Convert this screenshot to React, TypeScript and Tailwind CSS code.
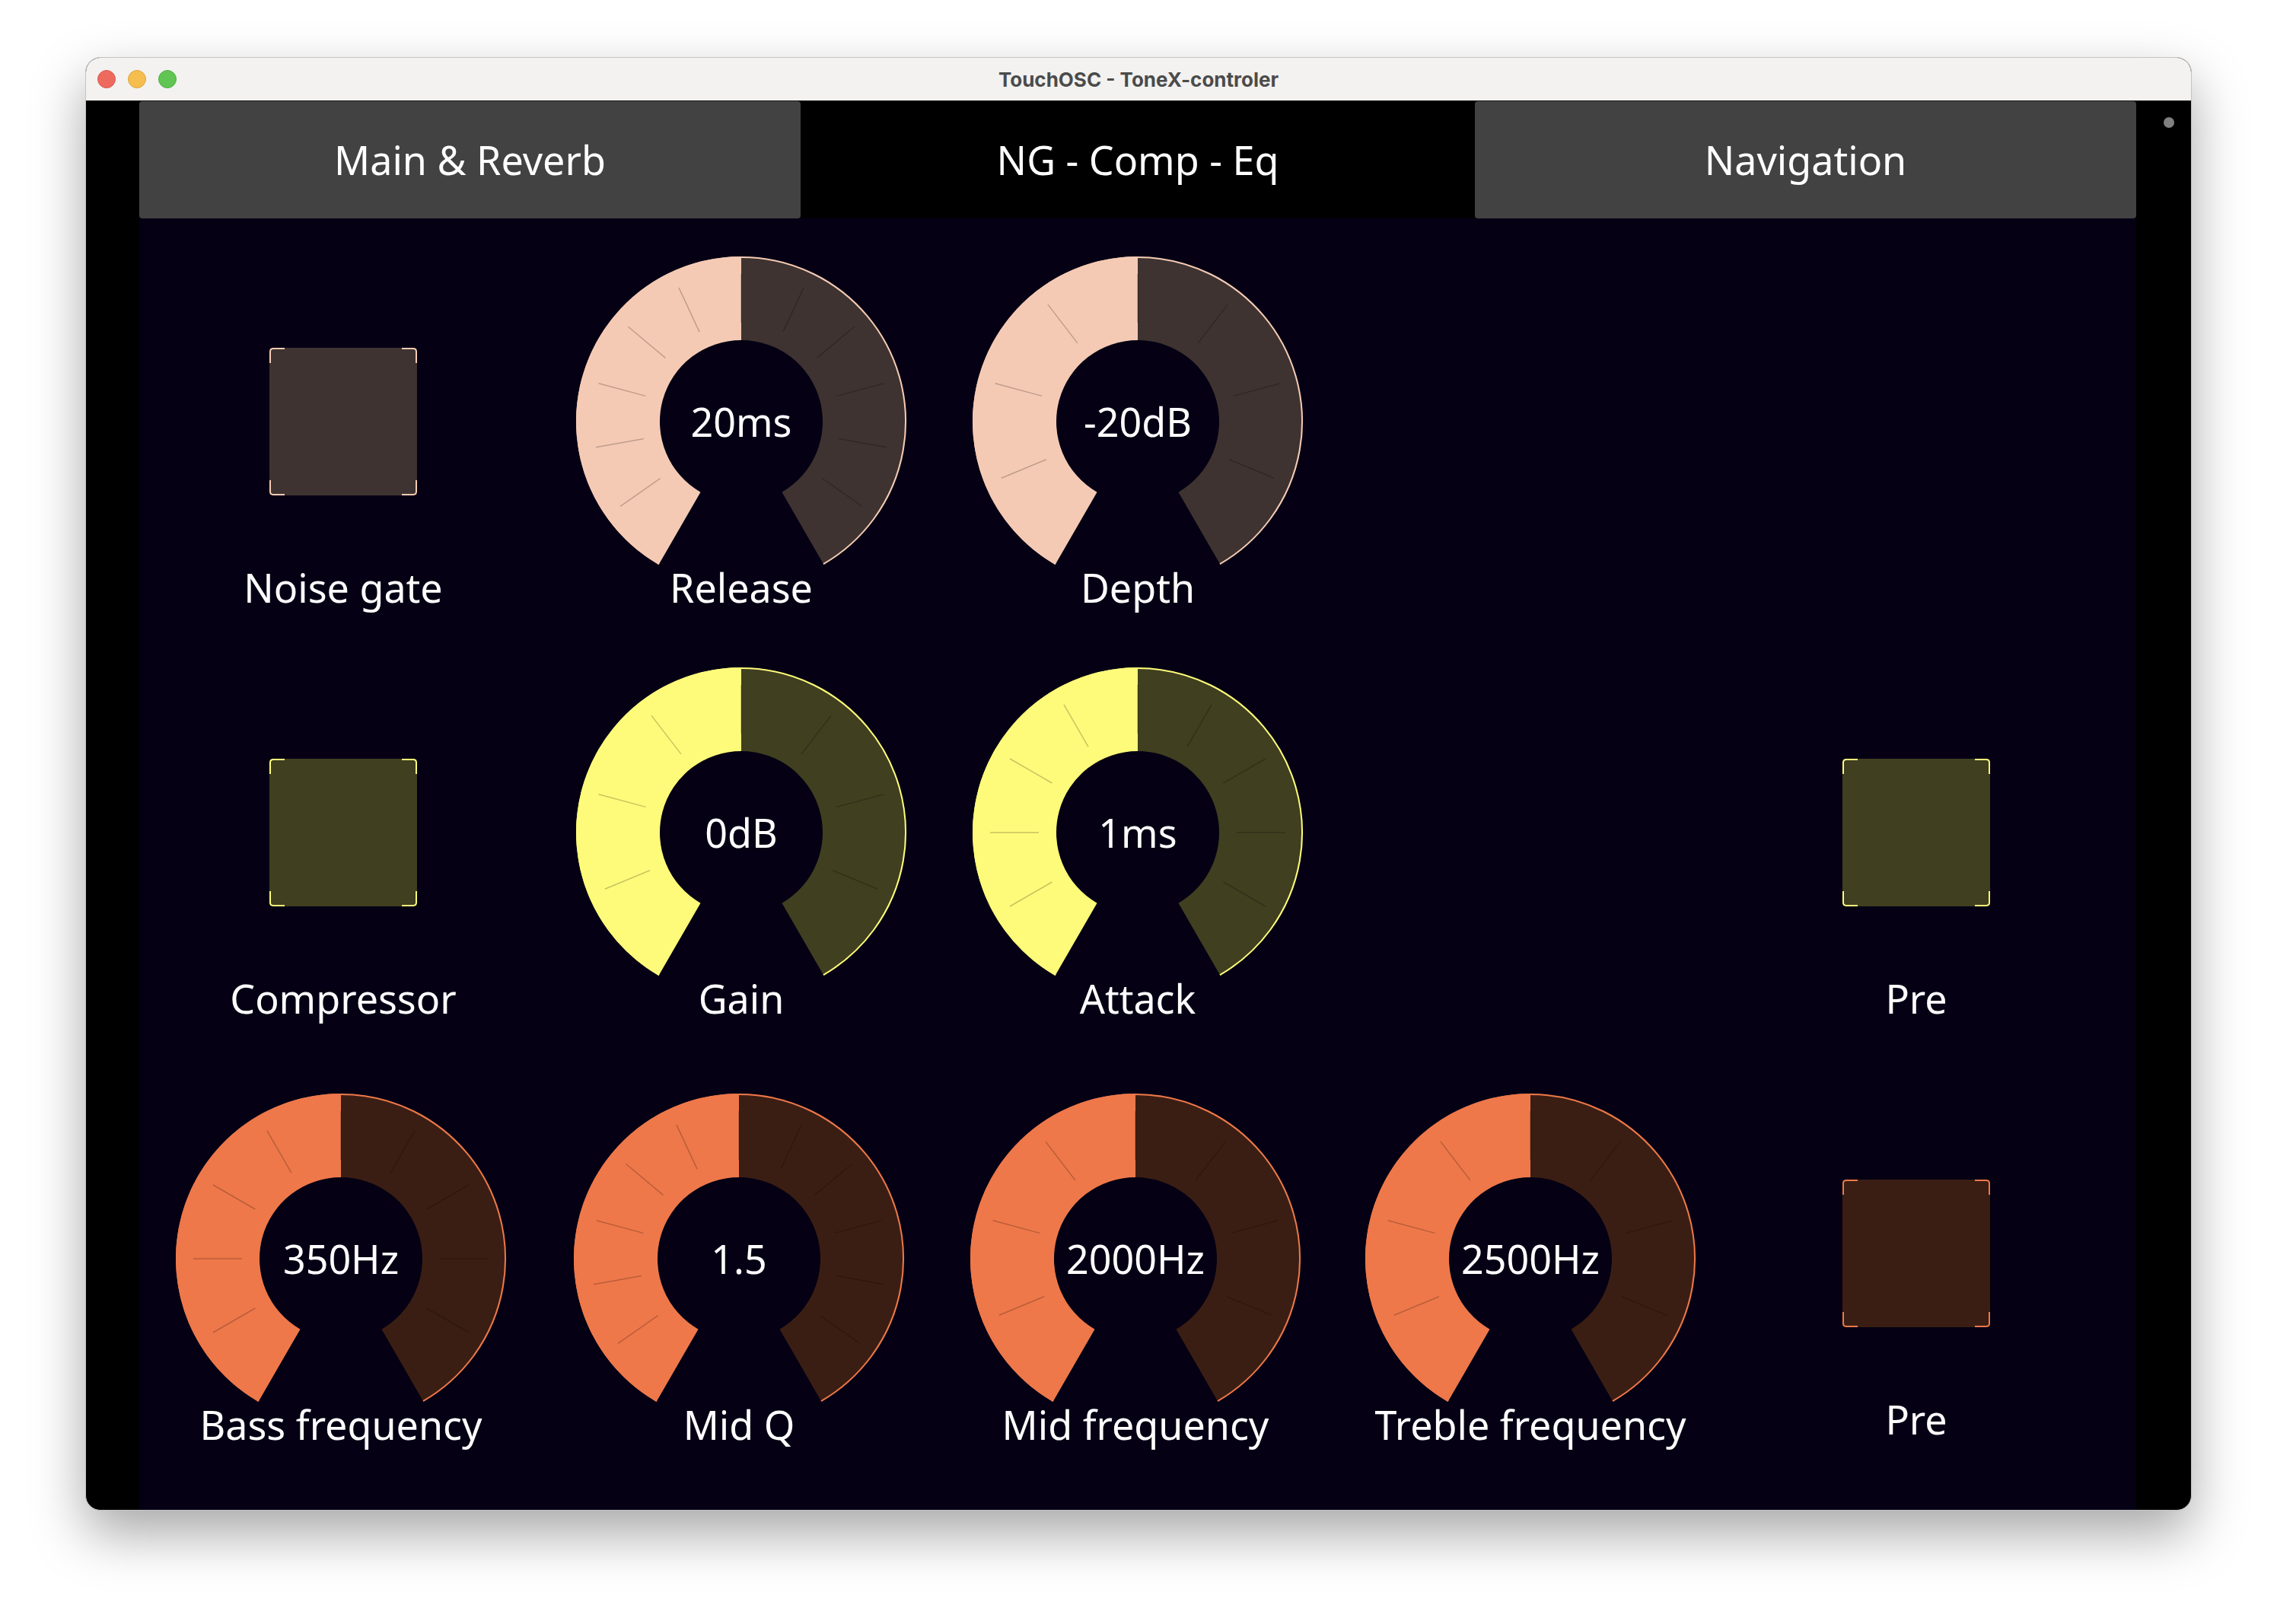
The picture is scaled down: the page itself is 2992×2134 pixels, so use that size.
import { ReactNode } from "react";

type Theme = { fill: string; dark: string; bg: string; corner: string };

const PEACH: Theme = { fill: "#f5cab4", dark: "#3e3330", bg: "bg-[#3e3330]", corner: "border-[#f5cab4]" };
const YELLOW: Theme = { fill: "#fefb7a", dark: "#403f20", bg: "bg-[#403f20]", corner: "border-[#fefb7a]" };
const ORANGE: Theme = { fill: "#ee784a", dark: "#3b1e13", bg: "bg-[#3b1e13]", corner: "border-[#ee784a]" };

// knob geometry (px): outer radius, inner radius, centre
const R = 217;
const r = 107;
const C = 217;

function xy(rad: number, deg: number) {
  const a = (deg * Math.PI) / 180;
  return [C + rad * Math.sin(a), C - rad * Math.cos(a)];
}

function pt(rad: number, deg: number) {
  const [x, y] = xy(rad, deg);
  return `${x.toFixed(2)} ${y.toFixed(2)}`;
}

function ring(a1: number, a2: number) {
  const large = a2 - a1 > 180 ? 1 : 0;
  return `M ${pt(R, a1)} A ${R} ${R} 0 ${large} 1 ${pt(R, a2)} L ${pt(r, a2)} A ${r} ${r} 0 ${large} 0 ${pt(r, a1)} Z`;
}

function Label({ children }: { children: ReactNode }) {
  return (
    <div className="text-[52px] leading-[64px] text-white whitespace-nowrap font-['Noto_Sans',sans-serif]">
      {children}
    </div>
  );
}

function Knob({ value, label, steps, theme }: { value: string; label: string; steps: number; theme: Theme }) {
  const ticks = Array.from({ length: steps - 1 }, (_, i) => -150 + ((i + 1) * 300) / steps);
  return (
    <div className="flex flex-col items-center">
      <div className="relative w-[434px] h-[403px]">
        <svg width="434" height="434" viewBox="0 0 434 434" className="absolute left-0 top-0 overflow-visible">
          <path d={ring(0, 150)} fill={theme.dark} />
          <path d={ring(-150, 0)} fill={theme.fill} />
          <path
            d={`M ${pt(R - 1, -150)} A ${R - 1} ${R - 1} 0 1 1 ${pt(R - 1, 150)}`}
            fill="none"
            stroke={theme.fill}
            strokeWidth="2"
          />
          {ticks.map((a) => {
            const [x1, y1] = xy(130, a);
            const [x2, y2] = xy(194, a);
            return <line key={a} x1={x1} y1={y1} x2={x2} y2={y2} stroke="rgba(0,0,0,0.22)" strokeWidth="1.5" />;
          })}
        </svg>
        <div className="absolute left-0 top-0 w-[434px] h-[434px] flex items-center justify-center">
          <Label>{value}</Label>
        </div>
      </div>
      <Label>{label}</Label>
    </div>
  );
}

function Toggle({ label, theme, shift = "" }: { label: string; theme: Theme; shift?: string }) {
  return (
    <div className={`flex flex-col items-center ${shift}`}>
      <div className="h-[403px] flex justify-center">
        <div className={`relative mt-[120px] w-[194px] h-[194px] rounded-[4px] ${theme.bg}`}>
          <div className={`absolute left-0 top-0 w-[20px] h-[20px] border-t-[2.5px] border-l-[2.5px] rounded-tl-[5px] ${theme.corner}`} />
          <div className={`absolute right-0 top-0 w-[20px] h-[20px] border-t-[2.5px] border-r-[2.5px] rounded-tr-[5px] ${theme.corner}`} />
          <div className={`absolute left-0 bottom-0 w-[20px] h-[20px] border-b-[2.5px] border-l-[2.5px] rounded-bl-[5px] ${theme.corner}`} />
          <div className={`absolute right-0 bottom-0 w-[20px] h-[20px] border-b-[2.5px] border-r-[2.5px] rounded-br-[5px] ${theme.corner}`} />
        </div>
      </div>
      <Label>{label}</Label>
    </div>
  );
}

function Row({ className, children }: { className: string; children: ReactNode }) {
  return (
    <div className={`grid grid-cols-[522px_524px_518px_520px_492px] justify-items-center ${className}`}>
      {children}
    </div>
  );
}

export default function App() {
  return (
    <div className="w-[2992px] h-[2134px] bg-white pt-[75px] pl-[112px]">
      <div className="w-[2768px] h-[1910px] rounded-[20px] overflow-hidden bg-black border border-[#c4c4c4] shadow-[0_30px_70px_rgba(0,0,0,0.35)] flex flex-col">
        {/* title bar */}
        <div className="relative h-[57px] shrink-0 bg-[#f3f2f0] border-b border-[#1a1a1a] flex items-center justify-center">
          <div className="absolute left-[15px] top-[16px] flex gap-[16px]">
            <div className="w-[24px] h-[24px] rounded-full bg-[#ee6a5f] border border-[#d9594f]" />
            <div className="w-[24px] h-[24px] rounded-full bg-[#f5be4f] border border-[#dea53c]" />
            <div className="w-[24px] h-[24px] rounded-full bg-[#61c554] border border-[#4fae43]" />
          </div>
          <div className="text-[26px] font-bold text-[#4b4b4b] font-['Inter',sans-serif]">TouchOSC - ToneX-controler</div>
        </div>

        <div className="flex flex-1">
          <div className="w-[70px] shrink-0" />
          <div className="w-[2624px] shrink-0 flex flex-col">
            {/* tabs */}
            <div className="grid grid-cols-[869px_1fr_869px] h-[154px] text-[52px] text-white font-['Noto_Sans',sans-serif]">
              <div className="bg-[#424242] rounded-[4px] flex items-center justify-center">Main &amp; Reverb</div>
              <div className="bg-black flex items-center justify-center">NG - Comp - Eq</div>
              <div className="bg-[#424242] rounded-[4px] flex items-center justify-center">Navigation</div>
            </div>

            {/* controls */}
            <div className="h-[1699px] bg-[#050014] flex flex-col pt-[50px]">
              <Row className="pl-[7px]">
                <Toggle label="Noise gate" theme={PEACH} />
                <Knob value="20ms" label="Release" steps={12} theme={PEACH} />
                <Knob value="-20dB" label="Depth" steps={8} theme={PEACH} />
              </Row>
              <Row className="pl-[7px] mt-[73px]">
                <Toggle label="Compressor" theme={YELLOW} />
                <Knob value="0dB" label="Gain" steps={8} theme={YELLOW} />
                <Knob value="1ms" label="Attack" steps={10} theme={YELLOW} />
                <div />
                <Toggle label="Pre" theme={YELLOW} shift="-translate-x-[2px]" />
              </Row>
              <Row className="pl-[4px] mt-[93px]">
                <Knob value="350Hz" label="Bass frequency" steps={10} theme={ORANGE} />
                <Knob value="1.5" label="Mid Q" steps={12} theme={ORANGE} />
                <Knob value="2000Hz" label="Mid frequency" steps={8} theme={ORANGE} />
                <Knob value="2500Hz" label="Treble frequency" steps={8} theme={ORANGE} />
                <Toggle label="Pre" theme={ORANGE} shift="-translate-y-[7px] translate-x-[1px]" />
              </Row>
            </div>
          </div>
          <div className="flex-1 pt-[21px] pl-[36px]">
            <div className="w-[14px] h-[14px] rounded-full bg-[#808080]" />
          </div>
        </div>
      </div>
    </div>
  );
}
